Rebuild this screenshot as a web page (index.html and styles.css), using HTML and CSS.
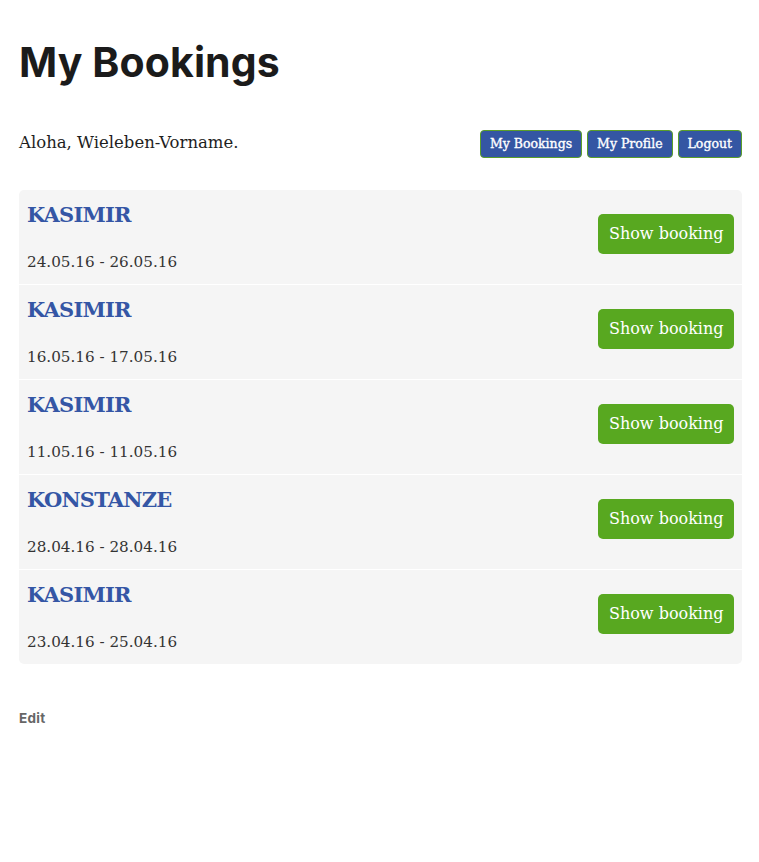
FILE: index.html
```html
<!DOCTYPE html>
<html lang="en">
<head>
<meta charset="utf-8">
<title>My Bookings</title>
<link rel="stylesheet" href="styles.css">
</head>
<body>
<div class="page">
  <h1 class="title">My Bookings</h1>
  <div class="greeting-row">
    <p class="greeting">Aloha, Wieleben-Vorname.</p>
    <nav class="nav">
      <a class="nav-btn" href="#">My Bookings</a>
      <a class="nav-btn" href="#">My Profile</a>
      <a class="nav-btn" href="#">Logout</a>
    </nav>
  </div>
  <div class="bookings">
    <div class="booking">
      <div class="info">
        <h2 class="name">KASIMIR</h2>
        <div class="dates">24.05.16 - 26.05.16</div>
      </div>
      <a class="show-btn" href="#">Show booking</a>
    </div>
    <div class="booking">
      <div class="info">
        <h2 class="name">KASIMIR</h2>
        <div class="dates">16.05.16 - 17.05.16</div>
      </div>
      <a class="show-btn" href="#">Show booking</a>
    </div>
    <div class="booking">
      <div class="info">
        <h2 class="name">KASIMIR</h2>
        <div class="dates">11.05.16 - 11.05.16</div>
      </div>
      <a class="show-btn" href="#">Show booking</a>
    </div>
    <div class="booking">
      <div class="info">
        <h2 class="name">KONSTANZE</h2>
        <div class="dates">28.04.16 - 28.04.16</div>
      </div>
      <a class="show-btn" href="#">Show booking</a>
    </div>
    <div class="booking">
      <div class="info">
        <h2 class="name">KASIMIR</h2>
        <div class="dates">23.04.16 - 25.04.16</div>
      </div>
      <a class="show-btn" href="#">Show booking</a>
    </div>
  </div>
  <a class="edit" href="#">Edit</a>
</div>
</body>
</html>
```
FILE: styles.css
```css
html, body {
  margin: 0;
  padding: 0;
  background: #ffffff;
}

body {
  font-family: "DejaVu Serif", "Liberation Serif", serif;
  color: #222222;
}

.page {
  padding: 38px 17px 40px 19px;
}

.title {
  margin: 0;
  font-family: Inter, "Liberation Sans", sans-serif;
  font-weight: 700;
  font-size: 41px;
  line-height: 48px;
  color: #1b1b1b;
  letter-spacing: 0.1px;
}

.greeting-row {
  margin-top: 44px;
  display: flex;
  justify-content: space-between;
  align-items: flex-start;
}

.greeting {
  margin: 0;
  font-size: 16.5px;
  line-height: 25px;
  color: #1e1e1e;
}

.nav {
  display: flex;
  gap: 5px;
}

.nav-btn {
  display: block;
  height: 26px;
  line-height: 26px;
  padding: 0 9px;
  border: 1px solid #5a9e2a;
  border-radius: 4px;
  background: #3456a3;
  color: #ffffff;
  font-size: 12.5px;
  text-decoration: none;
  -webkit-text-stroke: 0.35px #ffffff;
}

.bookings {
  margin-top: 32px;
  background: #f5f5f5;
  border-radius: 5px;
  overflow: hidden;
}

.booking {
  display: flex;
  justify-content: space-between;
  align-items: flex-start;
  padding: 10px 8px 12px 8px;
  border-bottom: 1px solid #ffffff;
}

.booking:last-child {
  border-bottom: none;
}

.name {
  margin: 0 0 22px 0;
  font-size: 21px;
  line-height: 30px;
  font-weight: 700;
  letter-spacing: -0.8px;
  color: #3456a5;
}

.dates {
  font-size: 15.2px;
  line-height: 20px;
  color: #333333;
}

.show-btn {
  display: block;
  margin-top: 14px;
  height: 40px;
  line-height: 40px;
  padding: 0 10.5px;
  border-radius: 5px;
  background: #58a820;
  color: #ffffff;
  font-size: 16px;
  text-decoration: none;
}

.edit {
  display: inline-block;
  margin-top: 46px;
  font-family: Inter, "Liberation Sans", sans-serif;
  font-weight: 700;
  font-size: 13.5px;
  line-height: 16px;
  letter-spacing: 0.3px;
  color: #666666;
  text-decoration: none;
}
```
